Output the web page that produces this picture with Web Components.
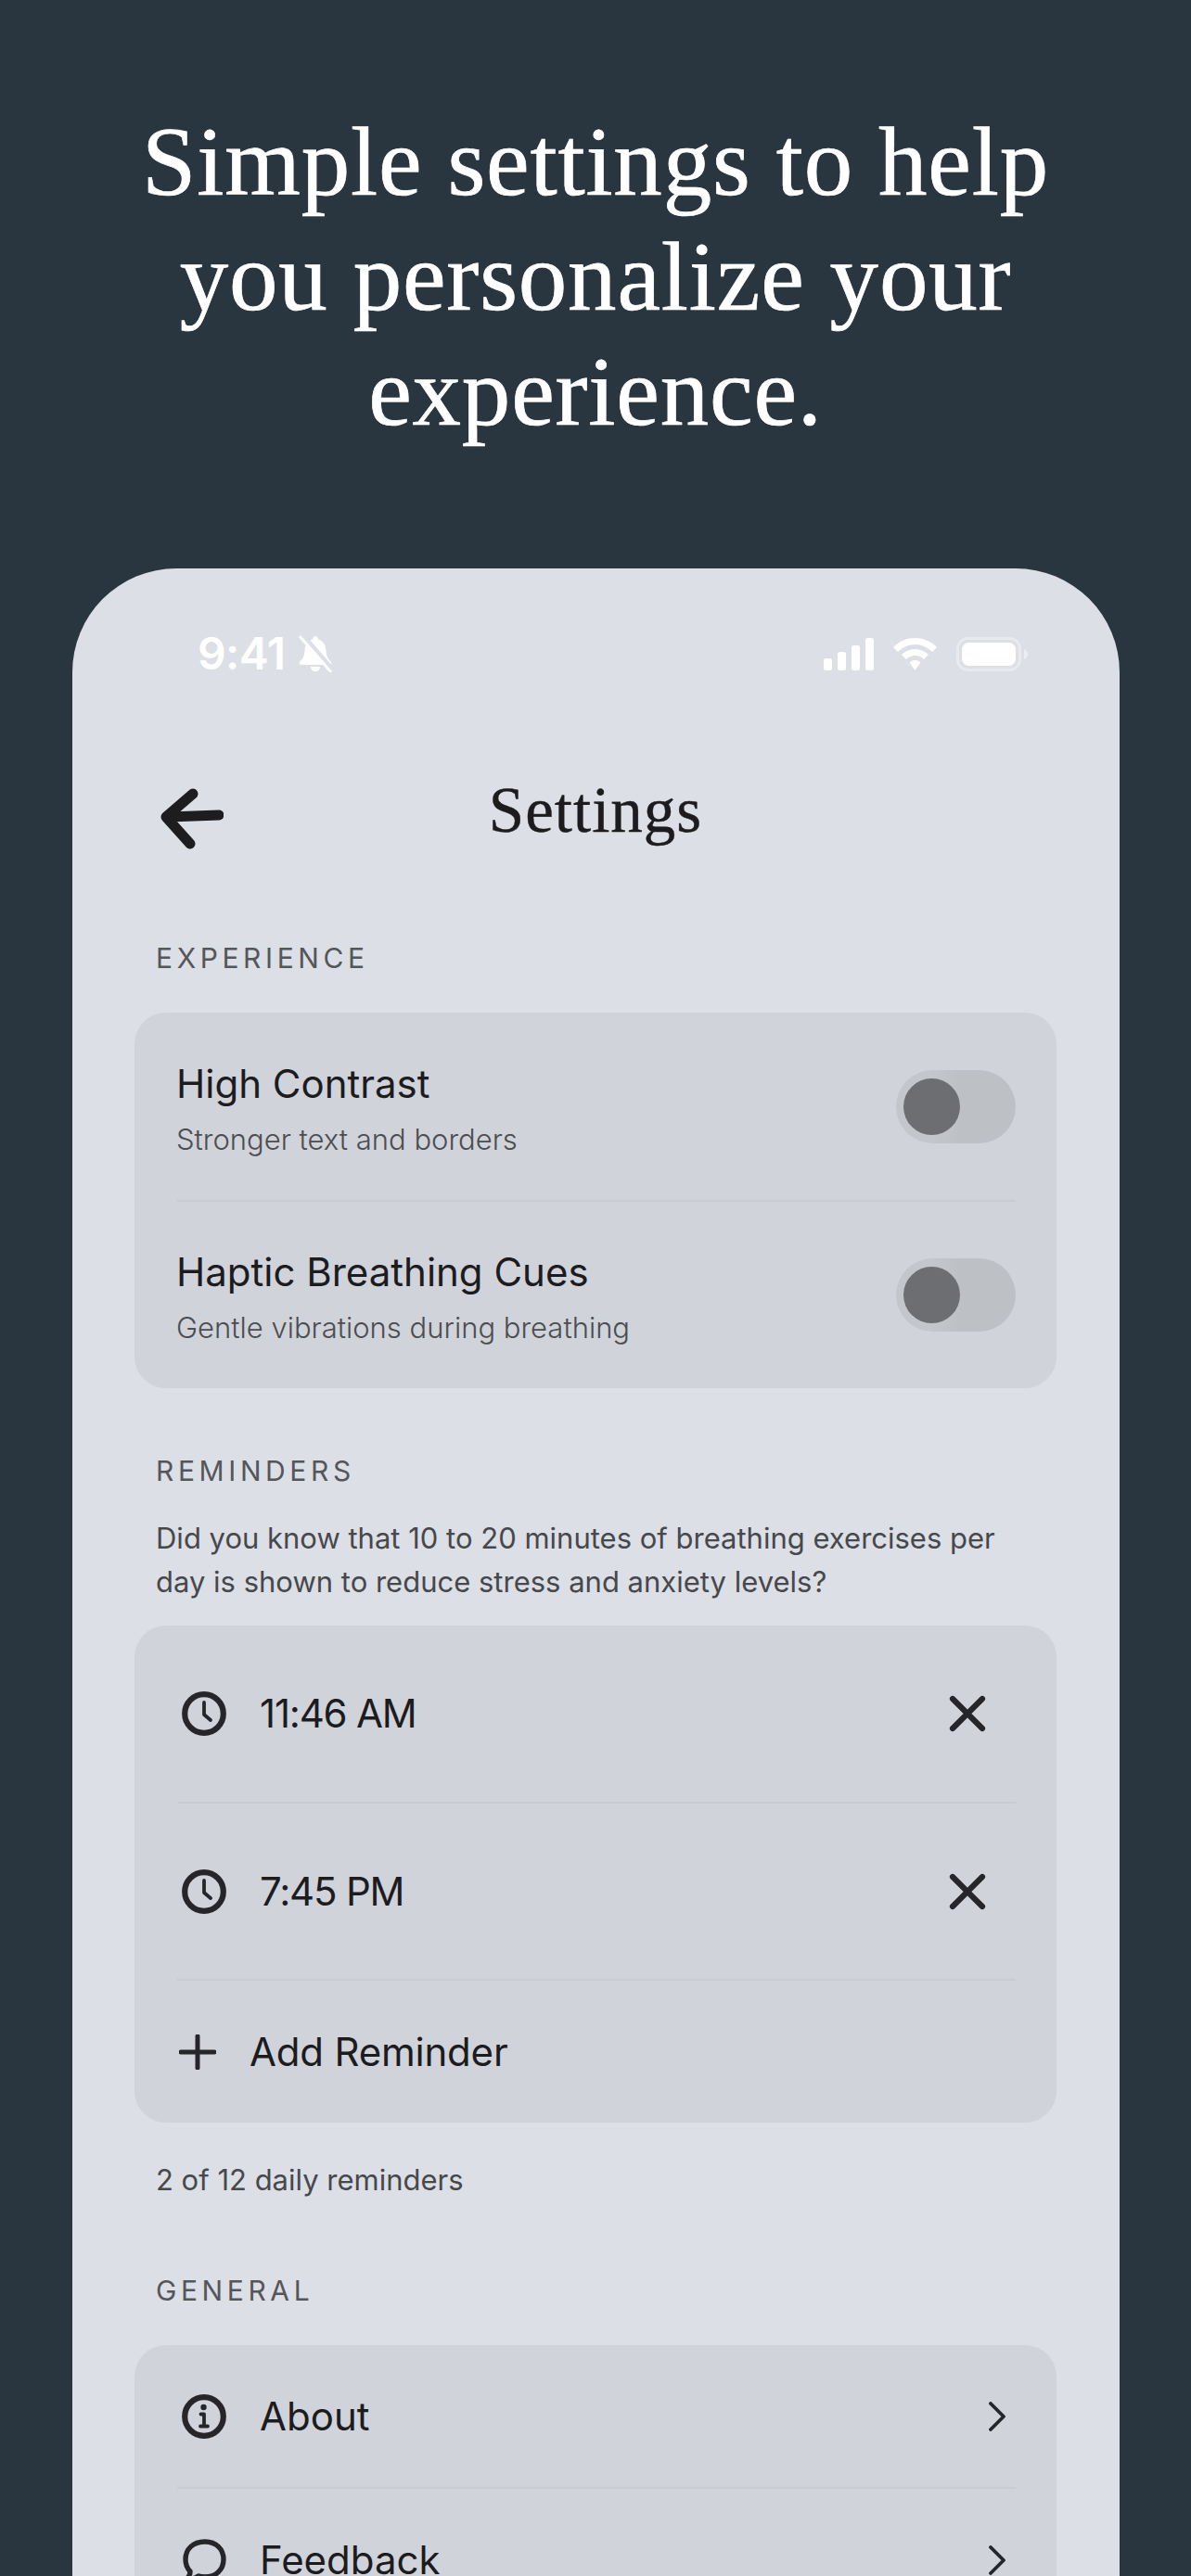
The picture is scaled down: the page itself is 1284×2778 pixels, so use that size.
<!doctype html>
<html lang="en"><head><meta charset="utf-8"><title>Settings</title>
<style>
html,body{margin:0;height:2778px;overflow:hidden;background:#2a363f}
body{font-family:Inter,"Noto Sans",sans-serif;color:#1c1c1f}
</style></head><body>
<app-hero>Simple settings to help<br>you personalize your<br>experience.</app-hero>
<phone-frame>
  <status-bar></status-bar>
  <nav-bar>Settings</nav-bar>
  <section-label style="margin-top:66px">EXPERIENCE</section-label>
  <settings-card style="margin-top:41px">
    <toggle-row title="High Contrast" sub="Stronger text and borders" divider></toggle-row>
    <toggle-row title="Haptic Breathing Cues" sub="Gentle vibrations during breathing"></toggle-row>
  </settings-card>
  <section-label style="margin-top:71px">REMINDERS</section-label>
  <note-text style="margin-top:31px">Did you know that 10 to 20 minutes of breathing exercises per<br>day is shown to reduce stress and anxiety levels?</note-text>
  <settings-card style="margin-top:24px">
    <icon-row icon="clock" label="11:46 AM" trail="close" h="192" divider digits></icon-row>
    <icon-row icon="clock" label="7:45 PM" trail="close" h="191" divider digits></icon-row>
    <add-row>Add Reminder</add-row>
  </settings-card>
  <note-text style="margin-top:38px">2 of 12 daily reminders</note-text>
  <section-label style="margin-top:78px">GENERAL</section-label>
  <settings-card style="margin-top:41px">
    <icon-row icon="info" label="About" trail="chevron" h="155" divider></icon-row>
    <icon-row icon="chat" label="Feedback" trail="chevron" h="155" divider></icon-row>
  </settings-card>
</phone-frame>
<script>
const ICONS={
 clock:'<svg width="48" height="48" viewBox="0 0 48 48" fill="none" stroke="#26262a" stroke-linecap="round" stroke-linejoin="round"><circle cx="24" cy="24" r="20.8" stroke-width="6.2"/><path d="M24 12V25L31 31" stroke-width="3.8"/></svg>',
 info:'<svg width="48" height="48" viewBox="0 0 48 48" fill="none" stroke="#26262a" stroke-linecap="round" stroke-linejoin="round"><circle cx="24" cy="24" r="20.8" stroke-width="6.2"/><circle cx="23.5" cy="14" r="3.2" fill="#26262a" stroke="none"/><path d="M20.500 21.500H24V34M20 34.500H28" stroke-width="3.8"/></svg>',
 chat:'<svg width="48" height="48" viewBox="0 0 48 48" fill="none" stroke="#26262a" stroke-linecap="round" stroke-linejoin="round" stroke-width="5.4"><path d="M25 4C12 4 4 12 4 23C4 29 6 33 9 36C9 40 7 43 4 45C10 45 15 43 18 41C20 42 23 42 25 42C37 42 45 34 45 23C45 12 37 4 25 4Z"/></svg>',
 close:'<svg width="40" height="40" viewBox="0 0 40 40" fill="none" stroke="#26262a" stroke-linecap="round" stroke-width="6.2"><path d="M4 4L36 36M36 4L4 36"/></svg>',
 chevron:'<svg width="18" height="32" viewBox="0 0 18 32" fill="none" stroke="#26262a" stroke-linecap="round" stroke-linejoin="round" stroke-width="3.8"><path d="M2 2L16 16L2 30"/></svg>'
};
function def(name,css,html){
  customElements.define(name,class extends HTMLElement{
    connectedCallback(){
      if(this.shadowRoot)return;
      const s=this.attachShadow({mode:'open'});
      s.innerHTML='<style>'+css+'</style>'+(typeof html==='function'?html(this):html);
    }
  });
}
def('app-hero',`:host{display:flex;justify-content:center;box-sizing:border-box;height:613px;padding-top:113px;
  font-family:"Liberation Serif",serif;font-size:105px;line-height:124px;color:#fff;text-align:center;letter-spacing:.8px;-webkit-text-stroke:.7px #fff}`,'<slot></slot>');
def('phone-frame',`:host{display:block;box-sizing:border-box;width:1129px;height:2165px;margin-left:78px;padding:0 68px 0 67px;
  background:#dcdfe6;border-radius:112px 112px 0 0;overflow:hidden}`,'<slot></slot>');
def('status-bar',`:host{display:flex;align-items:center;justify-content:space-between;height:184px;margin:0 -68px 0 -67px;padding-left:135px;padding-right:99px;color:#fff}
  .l{display:flex;align-items:center;gap:15px;font:600 48px/40px Inter,sans-serif;letter-spacing:-.6px}.r{display:flex;align-items:center;gap:21px}svg{display:block}`,
 `<div class="l"><span>9:41</span><svg width="37" height="40" viewBox="0 0 37 40"><path d="M18 1C20 1 21 2.500 21 4.500C27 6 29 11 29.500 17C30 23 32 26 35 29C36 31 35 32 33 32H3C1 32 0 31 1 29C4 26 6 23 6.500 17C7 11 9 6 15 4.500C15 2.500 16 1 18 1ZM13 34H23C23 37 21 39 18 39C15 39 13 37 13 34Z" fill="#fff"/><path d="M3 0L37 39" stroke="#dcdfe6" stroke-width="7"/><path d="M1 1L35 40" stroke="#fff" stroke-width="3"/></svg></div>
 <div class="r"><svg width="54" height="35" viewBox="0 0 54 35" fill="#fff"><rect x="0" y="22" width="9" height="13" rx="2.500"/><rect x="15" y="15" width="9" height="20" rx="2.500"/><rect x="30" y="8" width="9" height="27" rx="2.500"/><rect x="45" y="0" width="9" height="35" rx="2.500"/></svg>
 <svg width="47" height="35" viewBox="0 0 47 35" fill="#fff"><path d="M23.500 0C32 0 40 3 47 10L42 15C37 10 30 7 23.500 7C17 7 10 10 5 15L0 10C7 3 15 0 23.500 0Z"/><path d="M23.500 12C29 12 34 14 38 18L33 23C30 20 27 19 23.500 19C20 19 17 20 14 23L9 18C13 14 18 12 23.500 12Z"/><path d="M23.500 24C26 24 28 25 29.500 26.500L23.500 35L17.500 26.500C19 25 21 24 23.500 24Z"/></svg>
 <svg width="77" height="37" viewBox="0 0 77 37"><rect x="1.500" y="1.500" width="67" height="34" rx="11" fill="none" stroke="#fff" stroke-opacity=".35" stroke-width="3"/><rect x="6" y="6" width="58" height="25" rx="7.500" fill="#fff"/><path d="M73 13C76 14 77 16 77 18.500C77 21 76 23 73 24Z" fill="#fff" fill-opacity=".45"/></svg></div>`);
def('nav-bar',`:host{display:flex;position:relative;box-sizing:border-box;height:152px;padding-top:2px;align-items:center;justify-content:center;
  font-family:"Liberation Serif",serif;font-size:69px;letter-spacing:1px;color:#1c1c1f;-webkit-text-stroke:.4px #1c1c1f}
  svg{position:absolute;left:28px;top:53px}`,
  `<svg width="68" height="68" viewBox="0 0 68 68" fill="none" stroke="#1d1d20" stroke-linecap="round" stroke-linejoin="round" stroke-width="11"><path d="M35 6L6 31L32 60"/><path d="M9 31L63 29"/></svg><slot></slot>`);
def('section-label',`:host{display:block;margin-left:23px;font:400 30px/36px Inter,sans-serif;letter-spacing:4.6px;color:#55565a}`,'<slot></slot>');
def('note-text',`:host{display:block;margin-left:23px;font:400 31px/47px Inter,sans-serif;color:#47484c}`,'<slot></slot>');
def('settings-card',`:host{display:block;background:#d0d3da;border-radius:34px;overflow:hidden}`,'<slot></slot>');
def('toggle-row',`:host{display:flex;position:relative;box-sizing:border-box;height:204px;padding:5px 44px 0 45px;align-items:center;justify-content:space-between}
  :host(:last-child){height:201px}
  .d{position:absolute;left:46px;right:44px;bottom:0;height:2px;background:#c8cbd2}
  .t{font:400 42px/50px Inter,sans-serif;color:#1c1c1f}.s{margin-top:15px;font:300 31px/40px Inter,sans-serif;color:#4c4d51}
  .sw{box-sizing:border-box;width:129px;height:79px;padding:9px 8px;border-radius:40px;background:linear-gradient(90deg,#c3c6ca 0,#c3c6ca 30%,#bdc0c4 55%);margin-bottom:6px}
  .k{width:61px;height:61px;border-radius:50%;background:#6d6e71}`,
  e=>`<div><div class="t">${e.getAttribute('title')}</div><div class="s">${e.getAttribute('sub')}</div></div><div class="sw"><div class="k"></div></div>${e.hasAttribute('divider')?'<div class="d"></div>':''}`);
def('icon-row',`:host{display:flex;position:relative;box-sizing:border-box;align-items:center;padding:0 0 2px 51px;font:400 42px/50px Inter,sans-serif;color:#1c1c1f}
  :host([digits]){letter-spacing:-1.2px}
  .d{position:absolute;left:46px;right:44px;bottom:0;height:2px;background:#c8cbd2}
  svg{display:block;flex:none}.x{margin-left:36px;flex:1}.tr{display:flex;box-sizing:border-box}.tr.close{width:123px;padding-left:7px}.tr.chevron{width:144px;padding-left:71px}`,
  e=>`<style>:host{height:${e.getAttribute('h')}px}</style>${ICONS[e.getAttribute('icon')]}<span class="x">${e.getAttribute('label')}</span><div class="tr ${e.getAttribute('trail')}">${ICONS[e.getAttribute('trail')]}</div>${e.hasAttribute('divider')?'<div class="d"></div>':''}`);
def('add-row',`:host{display:flex;height:153px;box-sizing:border-box;align-items:center;padding:0 0 0 48px;gap:36px;font:400 42px/50px Inter,sans-serif;letter-spacing:-.2px;color:#1c1c1f}svg{display:block}`,
  `<svg width="40" height="38" viewBox="0 0 40 38" fill="none" stroke="#26262a" stroke-linecap="round" stroke-width="5"><path d="M20 2V36M2 19H38"/></svg><slot></slot>`);
</script></body></html>
